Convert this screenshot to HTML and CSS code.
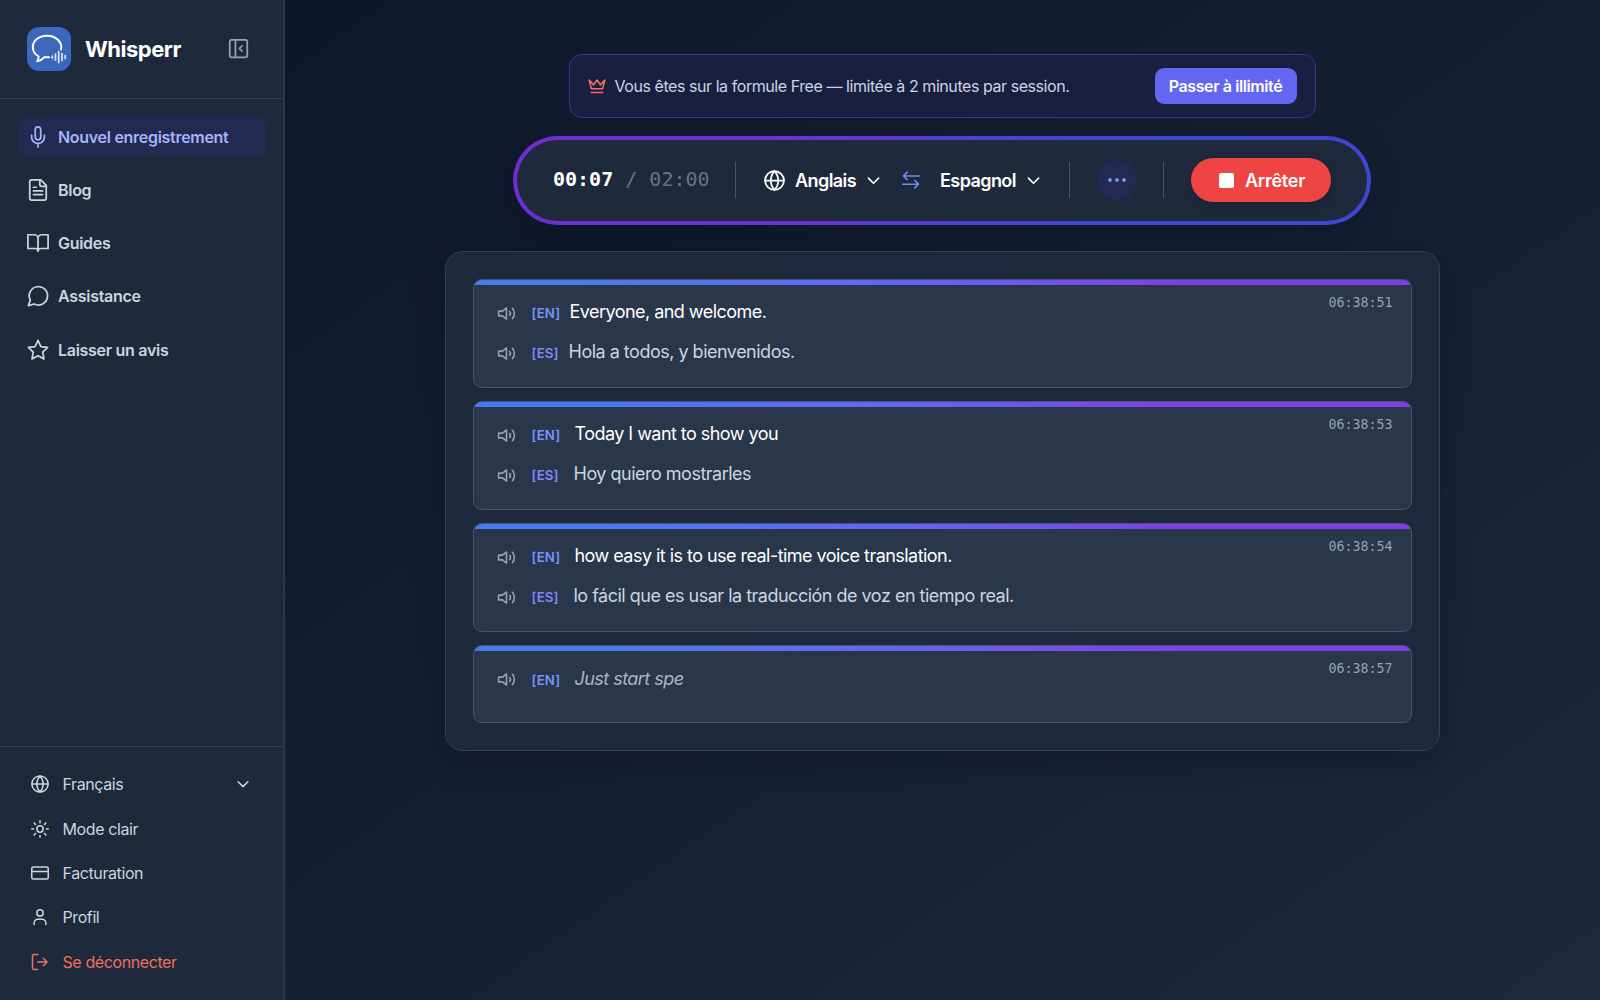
FILE: index.html
```html
<!DOCTYPE html>
<html lang="fr">
<head>
  <meta charset="UTF-8">
  <meta name="viewport" content="width=device-width, initial-scale=1.0">
  <title>Whisperr</title>
  <link rel="stylesheet" href="styles.css">
</head>
<body>
  <!-- shared icons -->
  <svg class="sprite" aria-hidden="true">
    <symbol id="i-globe" viewBox="0 0 24 24"><circle cx="12" cy="12" r="10.800"/><path d="M1.200 12h21.600M12 1.200a16.500 16.500 0 0 1 4.300 10.800 16.500 16.500 0 0 1-4.300 10.800 16.500 16.500 0 0 1-4.300-10.800 16.500 16.500 0 0 1 4.300-10.800z"/></symbol>
    <symbol id="i-chevron" viewBox="0 0 24 24"><path d="m5.500 9 6.500 6.500 6.500-6.500"/></symbol>
    <symbol id="i-speaker" viewBox="0 0 24 24"><path d="M12 5 7 9H2v6h5l5 4zM16 9.500a4 4 0 0 1 0 5M19.500 5.500a10 10 0 0 1 0 13"/></symbol>
  </svg>

  <div class="app">
    <aside class="sidebar">
      <div class="brand">
        <svg class="logo" viewBox="0 0 44 44">
          <rect width="44" height="44" rx="12" fill="#3b68bd"/>
          <path d="M34 22.500c1.600-7.500-5-13.800-14-13.800-8.300 0-14.200 5-14.200 11.400 0 4 2.200 7.300 5.900 9.400-.2 1.900-.6 3.300-1.600 4.800 2.700-.4 5-1.800 7-4h5" fill="none" stroke="#fff" stroke-width="1.900" stroke-linecap="round" stroke-linejoin="round"/>
          <path d="M25.300 29v2M28.500 27v6M31.700 24.500v11M35 26.500v7M38.200 28.500v3" fill="none" stroke="#dbe7ff" stroke-width="1.700" stroke-linecap="round"/>
        </svg>
        <span class="brand-name">Whisperr</span>
        <svg class="icon collapse" viewBox="0 0 24 24"><rect x="2" y="2" width="20" height="20" rx="2"/><path d="M8.500 2v20M16 9l-3 3 3 3"/></svg>
      </div>

      <nav class="nav">
        <a class="nav-item active"><svg class="icon" viewBox="0 0 24 24"><path d="M12 1a3 3 0 0 0-3 3v8a3 3 0 0 0 6 0V4a3 3 0 0 0-3-3z"/><path d="M19 10v2a7 7 0 0 1-14 0v-2M12 19v4"/></svg><span>Nouvel enregistrement</span></a>
        <a class="nav-item"><svg class="icon" viewBox="0 0 24 24"><path d="M15 1H5a2 2 0 0 0-2 2v18a2 2 0 0 0 2 2h14a2 2 0 0 0 2-2V7z"/><path d="M14 1v5a2 2 0 0 0 2 2h5M7 9h3M7 13h10M7 17h10"/></svg><span>Blog</span></a>
        <a class="nav-item"><svg class="icon" viewBox="0 0 24 24"><path d="M1 3h7a4 4 0 0 1 4 4v14a3 3 0 0 0-3-3H1zM23 3h-7a4 4 0 0 0-4 4v14a3 3 0 0 1 3-3h8z"/></svg><span>Guides</span></a>
        <a class="nav-item"><svg class="icon" viewBox="0 0 24 24"><path d="M7.900 20.700A10 10 0 1 0 3.600 16.500L1.500 22.500Z"/></svg><span>Assistance</span></a>
        <a class="nav-item"><svg class="icon" viewBox="0 0 24 24"><path d="m12 1.500 3.200 6.700 7.300 1.050-5.300 5.150 1.300 7.300L12 18.250 5.500 21.700l1.300-7.300L1.500 9.250l7.300-1.050z"/></svg><span>Laisser un avis</span></a>
      </nav>

      <div class="account">
        <a class="account-item"><svg class="icon"><use href="#i-globe"/></svg><span>Français</span><svg class="icon caret"><use href="#i-chevron"/></svg></a>
        <a class="account-item"><svg class="icon" viewBox="0 0 24 24"><circle cx="12" cy="12" r="4.200"/><path d="M12 1v2.500M12 20.500V23M4.200 4.200l1.800 1.800M18 18l1.800 1.800M1 12h2.500M20.500 12H23M6 18l-1.800 1.800M19.800 4.200 18 6"/></svg><span>Mode clair</span></a>
        <a class="account-item"><svg class="icon" viewBox="0 0 24 24"><rect x="1" y="4" width="22" height="16" rx="2"/><path d="M1 10h22"/></svg><span>Facturation</span></a>
        <a class="account-item"><svg class="icon" viewBox="0 0 24 24"><circle cx="12" cy="6.500" r="4.200"/><path d="M4.200 22v-2a5 5 0 0 1 5-5h5.600a5 5 0 0 1 5 5v2"/></svg><span>Profil</span></a>
        <a class="account-item logout"><svg class="icon" viewBox="0 0 24 24"><path d="M9 22H4a2 2 0 0 1-2-2V4a2 2 0 0 1 2-2h5M16.500 17l5-5-5-5M21.500 12H9"/></svg><span>Se déconnecter</span></a>
      </div>
    </aside>

    <main class="main">
      <div class="plan-banner">
        <svg class="icon crown" viewBox="0 0 24 24"><path d="m1.500 4 3 11.500h15l3-11.500-6 6.500-4.500-6.500-4.500 6.500zM4.500 20.500h15"/></svg>
        <span class="plan-text">Vous êtes sur la formule Free — limitée à 2 minutes par session.</span>
        <button class="upgrade">Passer à illimité</button>
      </div>

      <div class="controls">
        <div class="timer">00:07<span class="limit"> / 02:00</span></div>
        <i class="divider"></i>
        <div class="lang from"><svg class="icon globe"><use href="#i-globe"/></svg><span>Anglais</span><svg class="icon caret"><use href="#i-chevron"/></svg></div>
        <svg class="icon swap" viewBox="0 0 24 24"><path d="M23 6.500H2M7 1.500l-5 5 5 5M1 17.500h21M17 12.500l5 5-5 5"/></svg>
        <div class="lang to"><span>Espagnol</span><svg class="icon caret"><use href="#i-chevron"/></svg></div>
        <i class="divider"></i>
        <button class="more"><svg viewBox="0 0 18 4"><circle cx="2" cy="2" r="1.900"/><circle cx="9" cy="2" r="1.900"/><circle cx="16" cy="2" r="1.900"/></svg></button>
        <i class="divider"></i>
        <button class="stop"><i class="stop-mark"></i><span>Arrêter</span></button>
      </div>

      <section class="transcript">
        <article class="entry">
          <time>06:38:51</time>
          <div class="line"><svg class="icon"><use href="#i-speaker"/></svg><b>[EN]</b><p>Everyone, and welcome.</p></div>
          <div class="line translated"><svg class="icon"><use href="#i-speaker"/></svg><b>[ES]</b><p>Hola a todos, y bienvenidos.</p></div>
        </article>
        <article class="entry spaced">
          <time>06:38:53</time>
          <div class="line"><svg class="icon"><use href="#i-speaker"/></svg><b>[EN]</b><p>Today I want to show you</p></div>
          <div class="line translated"><svg class="icon"><use href="#i-speaker"/></svg><b>[ES]</b><p>Hoy quiero mostrarles</p></div>
        </article>
        <article class="entry spaced">
          <time>06:38:54</time>
          <div class="line"><svg class="icon"><use href="#i-speaker"/></svg><b>[EN]</b><p>how easy it is to use real-time voice translation.</p></div>
          <div class="line translated"><svg class="icon"><use href="#i-speaker"/></svg><b>[ES]</b><p>lo fácil que es usar la traducción de voz en tiempo real.</p></div>
        </article>
        <article class="entry spaced partial">
          <time>06:38:57</time>
          <div class="line"><svg class="icon"><use href="#i-speaker"/></svg><b>[EN]</b><p>Just start spe</p></div>
        </article>
      </section>
    </main>
  </div>
</body>
</html>
```
FILE: styles.css
```css
* {
  box-sizing: border-box;
}
body {
  margin: 0;
  font-family: Inter, "Liberation Sans", sans-serif;
  font-size: 16px;
  letter-spacing: -0.4px;
  color: #cbd5e1;
  background: #0f172a;
}
button {
  border: 0;
  padding: 0;
  font-family: inherit;
  letter-spacing: inherit;
  color: #fff;
}
.sprite {
  display: none;
}
.icon {
  flex: none;
  overflow: visible;
  fill: none;
  stroke: currentColor;
  stroke-width: 2;
  stroke-linecap: round;
  stroke-linejoin: round;
}
.app {
  display: flex;
  height: 1000px;
  overflow: hidden;
}

/* Sidebar */
.sidebar {
  display: flex;
  flex-direction: column;
  flex: none;
  width: 285px;
  background: #1e293b;
  border-right: 2px solid #2a384c;
}
.brand {
  display: flex;
  align-items: center;
  height: 99px;
  padding: 0 34px 1px 27px;
  border-bottom: 1px solid #334155;
}
.logo {
  width: 44px;
  height: 44px;
}
.brand-name {
  margin-left: 14px;
  font-size: 22px;
  font-weight: 700;
  letter-spacing: -0.5px;
  color: #fff;
}
.collapse {
  width: 21px;
  height: 21px;
  margin-left: auto;
  color: #94a3b8;
}
.nav {
  display: flex;
  flex-direction: column;
  gap: 13.3px;
  padding: 17.500px 17px 18px 18px;
}
.nav-item {
  display: flex;
  align-items: center;
  gap: 9px;
  height: 40px;
  padding-left: 9px;
  border-radius: 9px;
  font-weight: 600;
  letter-spacing: -0.29px;
}
.nav-item .icon {
  width: 22px;
  height: 22px;
  stroke-width: 1.900;
}
.nav-item.active {
  background: #232951;
  color: #a5b4fc;
}
.account {
  display: flex;
  flex-direction: column;
  margin-top: auto;
  height: 254px;
  padding: 15px 33px 0 31px;
  border-top: 1px solid #334155;
}
.account-item {
  display: flex;
  align-items: center;
  gap: 13.500px;
  height: 44.4px;
}
.account-item .icon {
  width: 18px;
  height: 18px;
}
.account-item .caret {
  margin-left: auto;
  margin-right: -2px;
}
.logout {
  color: #f0705f;
}

/* Main */
.main {
  display: flex;
  flex: 1;
  flex-direction: column;
  align-items: center;
  padding: 53.500px 1px 0 0;
  background: linear-gradient(145deg, #0f172a 0%, #1e293b 100%);
}
.plan-banner {
  display: flex;
  align-items: center;
  width: 747px;
  height: 64px;
  padding: 0 18px;
  border: 1px solid #3a3299;
  border-radius: 13px;
  background: #1a1f40;
}
.crown {
  width: 18px;
  height: 18px;
  color: #f4705f;
}
.plan-text {
  margin-left: 9px;
  letter-spacing: -0.44px;
}
.upgrade {
  width: 142px;
  height: 36px;
  margin-left: auto;
  border-radius: 9px;
  background: #6366f1;
  font-size: 16px;
  font-weight: 600;
}
.controls {
  display: flex;
  align-items: center;
  width: 858px;
  height: 89px;
  margin-top: 18px;
  padding: 0 36px;
  border: 4px solid transparent;
  border-radius: 45px;
  background: linear-gradient(#1e293b, #1e293b) padding-box,
              linear-gradient(90deg, #6d2fd4 30%, #4046d2 65%) border-box;
  box-shadow: 0 9px 28px rgba(8, 12, 32, 0.4);
  font-size: 18px;
  font-weight: 600;
  color: #fff;
}
.timer {
  width: 156px;
  margin-top: -2px;
  font-family: "DejaVu Sans Mono", monospace;
  font-size: 20px;
  font-weight: 700;
  letter-spacing: 0;
  white-space: pre;
}
.limit {
  font-weight: 400;
  color: #64748b;
}
.divider {
  width: 1px;
  height: 36px;
  margin-left: 26px;
  background: #475569;
}
.lang {
  display: flex;
  align-items: center;
  letter-spacing: -0.58px;
}
.lang.from {
  width: 115px;
  margin-left: 28px;
}
.globe {
  width: 21px;
  height: 21px;
  margin-right: 10px;
}
.lang .caret {
  width: 19px;
  height: 19px;
  margin-left: auto;
  margin-right: -4px;
}
.swap {
  width: 18px;
  height: 18px;
  margin-left: 23px;
  color: #6f8cf8;
}
.lang.to {
  width: 99px;
  margin-left: 20px;
}
.lang.to + .divider {
  margin-left: 30px;
}
.more {
  display: grid;
  place-items: center;
  width: 40px;
  height: 40px;
  margin-left: 27px;
  border-radius: 50%;
  background: #232951;
}
.more svg {
  width: 18px;
  height: 4px;
  fill: #7795ff;
}
.stop {
  display: flex;
  align-items: center;
  gap: 11px;
  width: 140px;
  height: 44px;
  margin-left: 27px;
  padding-left: 28px;
  border-radius: 22px;
  background: #ef4444;
  box-shadow: 0 4px 9px rgba(15, 23, 42, 0.35);
  font-size: 18px;
  font-weight: 600;
  letter-spacing: -0.25px;
}
.stop-mark {
  width: 15px;
  height: 15px;
  border-radius: 2px;
  background: #fff;
}

/* Transcript */
.transcript {
  display: flex;
  flex-direction: column;
  gap: 13.2px;
  width: 995px;
  margin-top: 26px;
  padding: 27px;
  border: 1px solid #334155;
  border-radius: 18px;
  background: #1e293b;
  box-shadow: 0 9px 28px rgba(8, 12, 32, 0.35);
}
.entry {
  position: relative;
  height: 109px;
  padding: 12px 23px 0;
  overflow: hidden;
  border: 1px solid #475569;
  border-radius: 9px;
  background: #2a3649;
}
.entry::before {
  content: "";
  position: absolute;
  top: 0;
  left: 0;
  right: 0;
  height: 5px;
  background: linear-gradient(90deg, #477bf3 10%, #6366f1 45%, #7e3fe8 75%);
}
.entry time {
  position: absolute;
  top: 15px;
  right: 18px;
  font-family: "DejaVu Sans Mono", monospace;
  font-size: 13.3px;
  letter-spacing: 0;
  line-height: 16px;
  color: #94a3b8;
}
.line {
  display: flex;
  align-items: center;
  height: 40px;
}
.line .icon {
  width: 19px;
  height: 19px;
  margin-top: 3px;
  color: #94a3b8;
}
.line b {
  width: 28px;
  margin: 3px 0 0 16px;
  font-size: 13.3px;
  font-weight: 600;
  letter-spacing: 0.1px;
  color: #7295ff;
}
.line p {
  margin: 0 0 0 10px;
  font-size: 18px;
  letter-spacing: -0.54px;
  color: #fff;
}
.line.translated b {
  width: 27px;
  color: #8187f8;
}
.line.translated p {
  letter-spacing: -0.5px;
  color: #cbd5e1;
}
.entry.spaced p {
  margin-left: 15px;
}
.entry.partial {
  height: 78px;
}
.entry.partial p {
  font-style: italic;
  color: #a9b5c6;
}
```
